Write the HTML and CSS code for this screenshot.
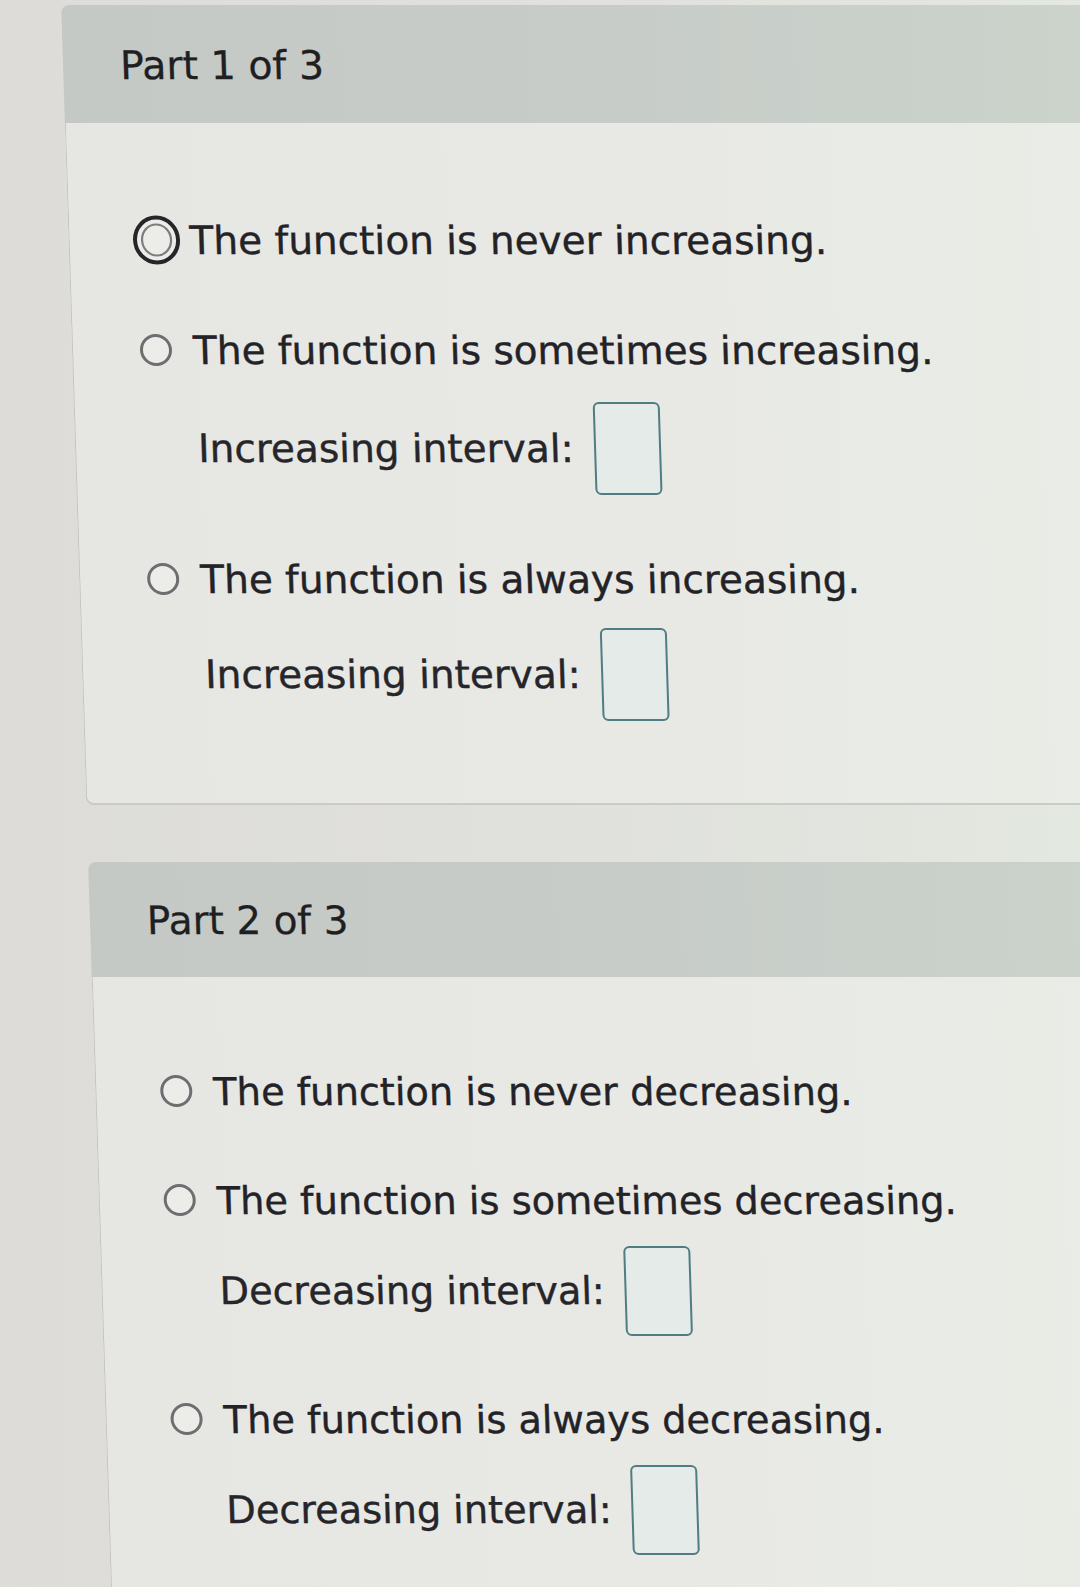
FILE: index.html
```html
<!DOCTYPE html>
<html lang="en">
<head>
<meta charset="utf-8">
<title>Parts</title>
<link rel="stylesheet" href="styles.css">
</head>
<body>
<div class="viewport">
<div class="page">
  <section class="part part-one">
    <div class="part-header">Part 1 of 3</div>
    <div class="part-body">
      <div class="option">
        <span class="radio-slot">
          <svg class="radio-selected" width="48" height="50" viewBox="0 0 48 50">
            <ellipse cx="24" cy="25" rx="21.5" ry="22.5" fill="#ecece9" stroke="#262628" stroke-width="4"/>
            <ellipse cx="24" cy="25" rx="14.5" ry="15.5" fill="#ecece9" stroke="#7d7d7f" stroke-width="2.2"/>
          </svg>
        </span>
        <span class="option-text">The function is never increasing.</span>
      </div>
      <div class="option gap-option">
        <span class="radio-slot"><span class="radio"></span></span>
        <span class="option-text">The function is sometimes increasing.</span>
      </div>
      <div class="interval">
        <span class="interval-label">Increasing interval:</span>
        <span class="answer-box"></span>
      </div>
      <div class="option gap-after-interval">
        <span class="radio-slot"><span class="radio"></span></span>
        <span class="option-text">The function is always increasing.</span>
      </div>
      <div class="interval interval-tight">
        <span class="interval-label">Increasing interval:</span>
        <span class="answer-box"></span>
      </div>
    </div>
  </section>

  <section class="part part-two">
    <div class="part-header short">Part 2 of 3</div>
    <div class="part-body open">
      <div class="option">
        <span class="radio-slot"><span class="radio"></span></span>
        <span class="option-text">The function is never decreasing.</span>
      </div>
      <div class="option gap-option">
        <span class="radio-slot"><span class="radio"></span></span>
        <span class="option-text">The function is sometimes decreasing.</span>
      </div>
      <div class="interval">
        <span class="interval-label">Decreasing interval:</span>
        <span class="answer-box"></span>
      </div>
      <div class="option gap-after-interval">
        <span class="radio-slot"><span class="radio"></span></span>
        <span class="option-text">The function is always decreasing.</span>
      </div>
      <div class="interval">
        <span class="interval-label">Decreasing interval:</span>
        <span class="answer-box"></span>
      </div>
    </div>
  </section>
</div>
</div>
</body>
</html>
```

FILE: styles.css
```css
html, body {
  margin: 0;
  padding: 0;
}

body {
  background: linear-gradient(90deg, #dddcd8 0%, #e0e0dc 50%, #e3e8e0 100%);
  font-family: "DejaVu Sans", Verdana, "Noto Sans", sans-serif;
  color: #232328;
}

.viewport {
  width: 1080px;
  height: 1587px;
  overflow: hidden;
}

.page {
  padding-top: 5px;
  transform: skewX(1.8deg);
  transform-origin: 0 0;
}

.part {
  margin-left: 61px;
}

.part-two {
  margin-top: 57px;
}

.part-header {
  height: 118px;
  display: flex;
  align-items: center;
  padding-left: 57px;
  padding-top: 2px;
  box-sizing: border-box;
  font-size: 39.5px;
  color: #1f1f22;
  -webkit-text-stroke: 0.3px #1f1f22;
  background: linear-gradient(90deg, #c4c9c5 0%, #c7ccc8 55%, #cbd3cb 100%);
  border-top-left-radius: 8px;
}

.part-header.short {
  height: 115px;
  font-size: 39px;
}

.part-body {
  background: linear-gradient(90deg, #e6e6e3 0%, #e8e8e5 50%, #e9ede6 100%);
  border-left: 1px solid #c4c4c0;
  border-bottom: 2px solid #cacac6;
  border-bottom-left-radius: 8px;
  padding: 93px 0 82px 0;
}

.part-body.open {
  padding-top: 90px;
  padding-bottom: 60px;
  border-bottom: none;
}

.option {
  display: flex;
  align-items: center;
  height: 48px;
}

.gap-option {
  margin-top: 62px;
}

.gap-after-interval {
  margin-top: 60px;
}

.part-two .gap-option {
  margin-top: 61px;
}

.part-two .gap-after-interval {
  margin-top: 59px;
}

.radio-slot {
  width: 50px;
  height: 50px;
  margin-left: 63px;
  display: flex;
  align-items: center;
  justify-content: flex-start;
  flex-shrink: 0;
}

.part-two .radio-slot {
  margin-left: 60px;
}

.radio {
  width: 26px;
  height: 26px;
  margin-left: 4px;
  border: 3px solid #6e6e70;
  border-radius: 50%;
  background: #ecece9;
}

.radio-selected {
  display: block;
}

.option-text {
  margin-left: 7px;
  font-size: 39px;
  white-space: nowrap;
  color: #222227;
  -webkit-text-stroke: 0.4px #222227;
}

.part-two .option-text {
  font-size: 38.3px;
}

.interval {
  display: flex;
  align-items: center;
  margin-top: 28px;
  padding-left: 122px;
}

.interval-tight {
  margin-top: 25px;
}

.part-two .interval {
  margin-top: 22px;
  padding-left: 117px;
}

.interval-label {
  font-size: 39px;
  white-space: nowrap;
  color: #25252a;
  -webkit-text-stroke: 0.4px #25252a;
}

.part-two .interval-label {
  font-size: 38.2px;
}

.answer-box {
  display: block;
  width: 63px;
  height: 89px;
  margin-left: 20px;
  border: 2px solid #4f7d82;
  border-radius: 6px;
  background: #e4ebe8;
}

.part-two .answer-box {
  height: 86px;
}
```
